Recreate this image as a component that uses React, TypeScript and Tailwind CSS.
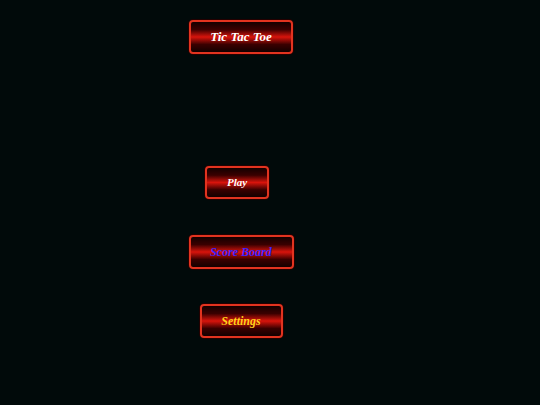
import type { ReactNode } from "react"

function MenuButton({ children, className }: { children: ReactNode; className?: string }) {
  return (
    <button
      className={
        "flex items-center justify-center rounded-[4px] border-2 border-[#e2331f] bg-[linear-gradient(to_bottom,#140000_0%,#3a0000_25%,#d8140c_50%,#3a0000_75%,#140000_100%)] font-['Liberation_Serif',serif] font-bold italic shadow-[0_0_0_1px_#240000] " +
        (className ?? "")
      }
    >
      {children}
    </button>
  )
}

export default function App() {
  return (
    <div className="h-[405px] w-[540px] bg-[#010a0a]">
      <div className="flex w-[482px] flex-col items-center pt-[20px]">
        <MenuButton className="h-[34px] w-[104px] text-[13px] text-white">Tic Tac Toe</MenuButton>
        <MenuButton className="mt-[112px] mr-2 h-[33px] w-[64px] text-[11px] text-white">Play</MenuButton>
        <MenuButton className="mt-[36px] h-[34px] w-[105px] text-[12px] text-[#3b22ff]">Score Board</MenuButton>
        <MenuButton className="mt-[35px] h-[34px] w-[83px] text-[12px] text-[#ffd21a]">Settings</MenuButton>
      </div>
    </div>
  )
}
